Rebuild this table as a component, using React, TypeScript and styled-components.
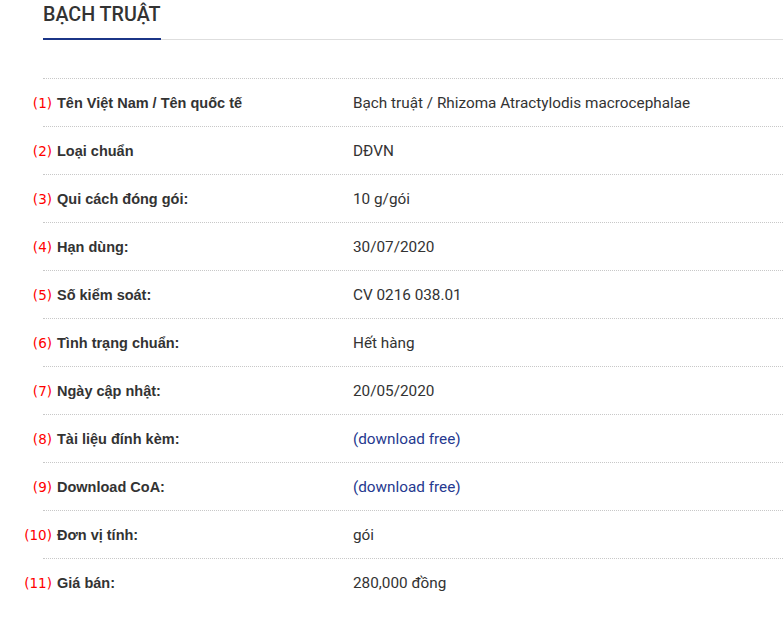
import React from "react";
import styled, { createGlobalStyle } from "styled-components";

const Global = createGlobalStyle`
  html, body { margin: 0; padding: 0; background: #fff; }
  body { font-family: Roboto, "Liberation Sans", sans-serif; color: #333; overflow: hidden; }
`;

const Page = styled.div`
  padding-left: 43px;
`;

const Header = styled.div`
  border-bottom: 1px solid #dedede;
`;

const Title = styled.h1`
  display: inline-block;
  margin: 0 0 -1px 0;
  padding: 3px 0 11px;
  font-family: Roboto, sans-serif;
  font-weight: 500;
  font-size: 19.7px;
  line-height: 24px;
  color: #333;
  border-bottom: 2px solid #1b3587;
`;

const Table = styled.div`
  margin-top: 38px;
`;

const Row = styled.div`
  display: grid;
  grid-template-columns: 310px 1fr;
  align-items: center;
  height: 48px;
  box-sizing: border-box;
  border-top: 1px dotted #c8c8c8;
`;

const Label = styled.div`
  display: flex;
  align-items: center;
  font-family: "Liberation Sans", Arial, sans-serif;
  font-weight: bold;
  font-size: 14.5px;
  color: #333;
`;

const Num = styled.span`
  display: inline-block;
  width: 40px;
  margin-left: -26px;
  padding-right: 5px;
  box-sizing: border-box;
  text-align: right;
  font-family: "DejaVu Sans", sans-serif;
  font-weight: normal;
  font-size: 13.5px;
  color: #f00;
`;

const Value = styled.div`
  font-family: Roboto, sans-serif;
  font-size: 15.3px;
  color: #333;
`;

const Link = styled.a`
  color: #26398f;
  text-decoration: none;
`;

const rows: { label: string; value: string; link?: boolean }[] = [
  { label: "Tên Việt Nam / Tên quốc tế", value: "Bạch truật / Rhizoma Atractylodis macrocephalae" },
  { label: "Loại chuẩn", value: "DĐVN" },
  { label: "Qui cách đóng gói:", value: "10 g/gói" },
  { label: "Hạn dùng:", value: "30/07/2020" },
  { label: "Số kiểm soát:", value: "CV 0216 038.01" },
  { label: "Tình trạng chuẩn:", value: "Hết hàng" },
  { label: "Ngày cập nhật:", value: "20/05/2020" },
  { label: "Tài liệu đính kèm:", value: "(download free)", link: true },
  { label: "Download CoA:", value: "(download free)", link: true },
  { label: "Đơn vị tính:", value: "gói" },
  { label: "Giá bán:", value: "280,000 đồng" },
];

export default function App() {
  return (
    <Page>
      <Global />
      <Header>
        <Title>BẠCH TRUẬT</Title>
      </Header>
      <Table>
        {rows.map((r, i) => (
          <Row key={i}>
            <Label>
              <Num>({i + 1})</Num>
              {r.label}
            </Label>
            <Value>{r.link ? <Link href="#">{r.value}</Link> : r.value}</Value>
          </Row>
        ))}
      </Table>
    </Page>
  );
}
